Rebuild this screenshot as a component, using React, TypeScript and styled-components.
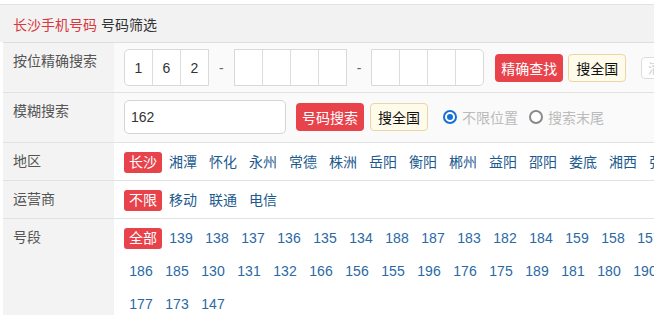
import styled, { createGlobalStyle } from 'styled-components';

const regions = ['长沙', '湘潭', '怀化', '永州', '常德', '株洲', '岳阳', '衡阳', '郴州', '益阳', '邵阳', '娄底', '湘西', '张家界'];
const carriers = ['不限', '移动', '联通', '电信'];
const prefixes = [
  '139', '138', '137', '136', '135', '134', '188', '187', '183', '182', '184', '159', '158', '157', '150', '151', '152',
  '186', '185', '130', '131', '132', '166', '156', '155', '196', '176', '175', '189', '181', '180', '190', '191', '193', '199',
  '177', '173', '147',
];

const GlobalStyle = createGlobalStyle`
  html, body {
    margin: 0;
    padding: 0;
    overflow: hidden;
    background: #fff;
  }
  body {
    font-family: "Liberation Sans", "Noto Sans CJK SC", sans-serif;
    font-size: 14px;
    color: #333;
  }
`;

const Page = styled.div`
  width: 800px;
  padding-top: 4px;
`;

const Header = styled.div`
  height: 37px;
  display: flex;
  align-items: center;
  padding-left: 13px;
  background: #f2f2f2;
  border-top: 1px solid #e2e2e2;
  > .city {
    color: #d8393f;
    margin-right: 4px;
  }
`;

const Table = styled.div`
  margin-left: 3px;
  border-top: 1px solid #dedede;
`;

const Row = styled.div`
  display: grid;
  grid-template-columns: 111px 1fr;
  border-bottom: 1px solid #e2e2e2;
`;

const Label = styled.div`
  background: #f3f3f3;
  padding: 8px 10px;
  line-height: 20px;
  color: #555;
`;

const Cell = styled.div<{ $pad: string; $shade?: boolean }>`
  display: flex;
  align-items: center;
  flex-wrap: wrap;
  padding: ${(p) => p.$pad};
  background: ${(p) => (p.$shade ? '#fafafa' : '#fff')};
`;

const TagList = styled(Cell)`
  align-items: flex-start;
  gap: 12px 2px;
`;

const NumberList = styled(TagList)`
  width: 660px;
`;

const Tag = styled.span<{ $active?: boolean; $num?: boolean }>`
  box-sizing: border-box;
  height: 21px;
  line-height: 21px;
  padding: 0 5px;
  min-width: ${(p) => (p.$num ? '34px' : 'auto')};
  text-align: center;
  border-radius: 3px;
  white-space: nowrap;
  cursor: pointer;
  color: ${(p) => (p.$active ? '#fff' : p.$num ? '#2a69a4' : '#1c5a8e')};
  background: ${(p) => (p.$active ? '#e8424b' : 'transparent')};
`;

const DigitGroup = styled.div<{ $round: 'left' | 'right' | 'none' }>`
  display: flex;
  height: 37px;
  box-sizing: border-box;
  border: 1px solid #d9d9d9;
  background: #fff;
  border-radius: ${(p) => (p.$round === 'left' ? '5px 0 0 5px' : p.$round === 'right' ? '0 5px 5px 0' : '0')};
`;

const Digit = styled.div`
  width: 27px;
  display: flex;
  align-items: center;
  justify-content: center;
  color: #333;
  & + & {
    border-left: 1px solid #dddddd;
  }
`;

const Dash = styled.span`
  margin: 0 10px;
  color: #666;
`;

const RedButton = styled.button<{ $gap: number }>`
  height: 28px;
  margin-left: ${(p) => p.$gap}px;
  padding: 0 6px;
  border: none;
  border-radius: 4px;
  background: #e8424b;
  color: #fff;
  font: inherit;
  cursor: pointer;
`;

const NationButton = styled.button<{ $gap?: number }>`
  height: 28px;
  margin-left: ${(p) => p.$gap ?? 5}px;
  padding: 0 7px;
  border: 1px solid #e8d7a4;
  border-radius: 4px;
  background: #fffbea;
  color: #111;
  font: inherit;
  cursor: pointer;
`;

const GhostButton = styled.button`
  height: 22px;
  margin-left: 15px;
  padding: 0 6px;
  border: 1px solid #dddddd;
  border-radius: 4px;
  background: #fff;
  color: #cccccc;
  font: inherit;
  font-size: 13px;
  white-space: nowrap;
`;

const SearchInput = styled.input`
  box-sizing: border-box;
  width: 162px;
  height: 34px;
  padding: 0 6px;
  border: 1px solid #d4d4d4;
  border-radius: 5px;
  background: #fff;
  color: #333;
  font: inherit;
  outline: none;
`;

const RadioOption = styled.label<{ $gap: number }>`
  display: flex;
  align-items: center;
  margin-left: ${(p) => p.$gap}px;
  color: #bbbbbb;
  cursor: pointer;
`;

const RadioDot = styled.span<{ $on?: boolean }>`
  box-sizing: border-box;
  width: 14px;
  height: 14px;
  margin-right: 5px;
  border-radius: 50%;
  border: ${(p) => (p.$on ? '2px solid #1670d8' : '2.5px solid #8a8a8a')};
  background: #fff;
  display: inline-flex;
  align-items: center;
  justify-content: center;
  &::after {
    content: '';
    width: 6px;
    height: 6px;
    border-radius: 50%;
    background: ${(p) => (p.$on ? '#1670d8' : 'transparent')};
  }
`;

const digits = (values: string[]) => values.map((v, i) => <Digit key={i}>{v}</Digit>);

const App = () => {
  return (
    <Page>
      <GlobalStyle />
      <Header>
        <span className="city">长沙手机号码</span>
        <span>号码筛选</span>
      </Header>
      <Table>
        <Row>
          <Label>按位精确搜索</Label>
          <Cell $pad="6px 10px" $shade>
            <DigitGroup $round="left">{digits(['1', '6', '2'])}</DigitGroup>
            <Dash>-</Dash>
            <DigitGroup $round="none">{digits(['', '', '', ''])}</DigitGroup>
            <Dash>-</Dash>
            <DigitGroup $round="right">{digits(['', '', '', ''])}</DigitGroup>
            <RedButton $gap={11}>精确查找</RedButton>
            <NationButton>搜全国</NationButton>
            <GhostButton>清空</GhostButton>
          </Cell>
        </Row>
        <Row>
          <Label>模糊搜索</Label>
          <Cell $pad="7px 10px 8px" $shade>
            <SearchInput defaultValue="162" />
            <RedButton $gap={10}>号码搜索</RedButton>
            <NationButton $gap={6}>搜全国</NationButton>
            <RadioOption $gap={15}>
              <RadioDot $on />
              不限位置
            </RadioOption>
            <RadioOption $gap={11}>
              <RadioDot />
              搜索末尾
            </RadioOption>
          </Cell>
        </Row>
        <Row>
          <Label>地区</Label>
          <TagList $pad="9px 10px 7px">
            {regions.map((r, i) => (
              <Tag key={r} $active={i === 0}>
                {r}
              </Tag>
            ))}
          </TagList>
        </Row>
        <Row>
          <Label>运营商</Label>
          <TagList $pad="9px 10px 7px">
            {carriers.map((c, i) => (
              <Tag key={c} $active={i === 0}>
                {c}
              </Tag>
            ))}
          </TagList>
        </Row>
        <Row>
          <Label>号段</Label>
          <NumberList $pad="9px 10px 7px">
            <Tag $active>全部</Tag>
            {prefixes.map((n) => (
              <Tag key={n} $num>
                {n}
              </Tag>
            ))}
          </NumberList>
        </Row>
      </Table>
    </Page>
  );
};

export default App;
